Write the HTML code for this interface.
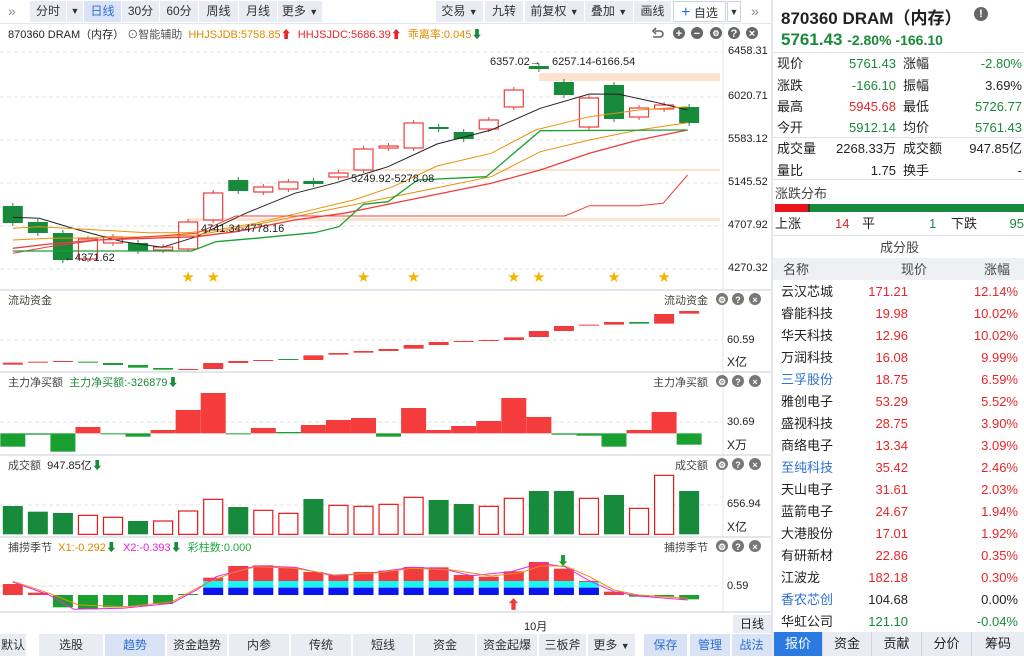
<!DOCTYPE html>
<html><head><meta charset="utf-8"><style>
*{margin:0;padding:0;box-sizing:border-box}
body{width:1024px;height:656px;overflow:hidden;background:#fff;font-family:"Liberation Sans","Noto Sans CJK SC",sans-serif;font-size:12px;color:#222;position:relative}
.a{position:absolute;white-space:nowrap}
.btn{position:absolute;top:1px;height:21px;background:#e9ecf3;line-height:21px;text-align:center;font-size:12px;color:#333}
.tab{position:absolute;top:634px;height:22px;background:#e9ecf3;line-height:22px;text-align:center;font-size:12px;color:#333}
.r{color:#e8262a}.g{color:#198a3a}.b{color:#2f6fd0}
.row{position:absolute;left:775px;width:249px;height:21px;font-size:13px;line-height:21px}
.row span{position:absolute}
.sep{position:absolute;left:773px;width:251px;height:1px;background:#dde1ea}
</style></head><body>
<div class="a" style="left:8px;top:3px;font-size:14px;color:#888">»</div>
<div class="btn" style="left:30px;width:36px">分时</div>
<div class="btn" style="left:67px;width:16px;font-size:9px">▼</div>
<div class="btn" style="left:84px;width:37px;background:#d9e3f5;color:#2f6fd0">日线</div>
<div class="btn" style="left:122px;width:37px">30分</div>
<div class="btn" style="left:160px;width:38px">60分</div>
<div class="btn" style="left:199px;width:39px">周线</div>
<div class="btn" style="left:239px;width:38px">月线</div>
<div class="btn" style="left:278px;width:44px">更多 <span style="font-size:9px">▼</span></div>
<div class="btn" style="left:436px;width:47px">交易 <span style="font-size:9px">▼</span></div>
<div class="btn" style="left:485px;width:38px">九转</div>
<div class="btn" style="left:525px;width:59px">前复权 <span style="font-size:9px">▼</span></div>
<div class="btn" style="left:585px;width:48px">叠加 <span style="font-size:9px">▼</span></div>
<div class="btn" style="left:634px;width:37px">画线</div>
<div class="btn" style="left:673px;width:53px;background:#fff;border:1px solid #c9d3e6"><span class="b" style="font-size:16px">+</span> 自选</div>
<div class="btn" style="left:727px;width:14px;background:#fff;border:1px solid #c9d3e6;font-size:9px">▼</div>
<div class="a" style="left:751px;top:3px;font-size:14px;color:#888">»</div>
<div class="a" style="left:0;top:23px;width:771px;height:1px;background:#e3e6ec"></div>
<div class="a" style="left:771px;top:0;width:2px;height:656px;background:#e3e6ec"></div>
<div class="a" style="left:8px;top:26px;font-size:11px">870360 DRAM（内存） <span style="color:#555">⊙智能辅助</span> &nbsp;<span style="color:#e08a00">HHJSJDB:5758.85</span><span class="r">⬆</span> &nbsp;<span class="r">HHJSJDC:5686.39⬆</span> &nbsp;<span style="color:#e08a00">乖离率:0.045</span><span class="g">⬇</span></div>
<svg id="c" class="a" style="left:0;top:0" width="771" height="634"></svg>
<div class="a" style="left:728px;top:45px;font-size:11px">6458.31</div>
<div class="a" style="left:728px;top:90px;font-size:11px">6020.71</div>
<div class="a" style="left:728px;top:133px;font-size:11px">5583.12</div>
<div class="a" style="left:728px;top:176px;font-size:11px">5145.52</div>
<div class="a" style="left:728px;top:219px;font-size:11px">4707.92</div>
<div class="a" style="left:728px;top:262px;font-size:11px">4270.32</div>
<div class="a" style="left:490px;top:56px;font-size:11px">6357.02→</div>
<div class="a" style="left:552px;top:56px;font-size:11px">6257.14-6166.54</div>
<div class="a" style="left:351px;top:173px;font-size:11px">5249.92-5278.08</div>
<div class="a" style="left:201px;top:223px;font-size:11px">4741.34-4778.16</div>
<div class="a" style="left:64px;top:252px;font-size:11px">←4371.62</div>
<div class="a" style="left:8px;top:292px;font-size:11px;color:#444">流动资金</div>
<div class="a" style="left:664px;top:292px;font-size:11px;color:#444">流动资金</div>
<div class="a" style="left:727px;top:334px;font-size:11px">60.59</div>
<div class="a" style="left:727px;top:353px;font-size:12px">X亿</div>
<div class="a" style="left:8px;top:374px;font-size:11px;color:#444">主力净买额 &nbsp;<span class="g">主力净买额:-326879⬇</span></div>
<div class="a" style="left:653px;top:374px;font-size:11px;color:#444">主力净买额</div>
<div class="a" style="left:727px;top:416px;font-size:11px">30.69</div>
<div class="a" style="left:727px;top:436px;font-size:12px">X万</div>
<div class="a" style="left:8px;top:457px;font-size:11px;color:#444">成交额 &nbsp;<span style="color:#222">947.85亿</span><span class="g">⬇</span></div>
<div class="a" style="left:675px;top:457px;font-size:11px;color:#444">成交额</div>
<div class="a" style="left:727px;top:498px;font-size:11px">656.94</div>
<div class="a" style="left:727px;top:518px;font-size:12px">X亿</div>
<div class="a" style="left:8px;top:539px;font-size:11px;color:#444">捕捞季节 &nbsp;<span style="color:#e08a00">X1:-0.292</span><span class="g">⬇</span> &nbsp;<span style="color:#e020e0">X2:-0.393</span><span class="g">⬇</span> &nbsp;<span style="color:#22a83a">彩柱数:0.000</span></div>
<div class="a" style="left:664px;top:539px;font-size:11px;color:#444">捕捞季节</div>
<div class="a" style="left:727px;top:580px;font-size:11px">0.59</div>
<div class="a" style="left:524px;top:618px;font-size:11px">10月</div>
<div class="a" style="left:733px;top:615px;width:38px;height:18px;background:#e9ecf3;text-align:center;line-height:18px">日线</div>
<div class="tab" style="left:0;width:26px">默认</div>
<div class="tab" style="left:39px;width:64px">选股</div>
<div class="tab" style="left:105px;width:60px;background:#d9e3f5;color:#2f6fd0">趋势</div>
<div class="tab" style="left:167px;width:60px">资金趋势</div>
<div class="tab" style="left:229px;width:60px">内参</div>
<div class="tab" style="left:291px;width:60px">传统</div>
<div class="tab" style="left:353px;width:60px">短线</div>
<div class="tab" style="left:415px;width:60px">资金</div>
<div class="tab" style="left:477px;width:60px">资金起爆</div>
<div class="tab" style="left:539px;width:47px">三板斧</div>
<div class="tab" style="left:588px;width:47px">更多 <span style="font-size:9px">▼</span></div>
<div class="tab" style="left:644px;width:43px;background:#d9e3f5;color:#2f6fd0">保存</div>
<div class="tab" style="left:690px;width:40px;background:#d9e3f5;color:#2f6fd0">管理</div>
<div class="tab" style="left:732px;width:39px;background:#d9e3f5;color:#2f6fd0">战法</div>
<div class="a" style="left:781px;top:4px;font-size:17px;font-weight:bold">870360 DRAM（内存）</div>
<div class="a" style="left:974px;top:7px;width:14px;height:14px;border-radius:7px;background:#666;color:#fff;font-size:11px;font-weight:bold;text-align:center;line-height:14px">!</div>
<div class="a g" style="left:781px;top:30px;font-size:17px;font-weight:bold">5761.43 <span style="font-size:14px">-2.80% -166.10</span></div>
<div class="sep" style="top:52px"></div>
<div class="row" style="top:53px"><span style="left:2px">现价</span><span class="g" style="right:128px">5761.43</span><span style="left:128px">涨幅</span><span class="g" style="right:2px">-2.80%</span></div>
<div class="row" style="top:75px"><span style="left:2px">涨跌</span><span class="g" style="right:128px">-166.10</span><span style="left:128px">振幅</span><span style="right:2px">3.69%</span></div>
<div class="row" style="top:96px"><span style="left:2px">最高</span><span class="r" style="right:128px">5945.68</span><span style="left:128px">最低</span><span class="g" style="right:2px">5726.77</span></div>
<div class="row" style="top:117px"><span style="left:2px">今开</span><span class="g" style="right:128px">5912.14</span><span style="left:128px">均价</span><span class="g" style="right:2px">5761.43</span></div>
<div class="sep" style="top:137px"></div>
<div class="row" style="top:138px"><span style="left:2px">成交量</span><span style="right:128px">2268.33万</span><span style="left:128px">成交额</span><span style="right:2px">947.85亿</span></div>
<div class="row" style="top:160px"><span style="left:2px">量比</span><span style="right:128px">1.75</span><span style="left:128px">换手</span><span style="right:2px">-</span></div>
<div class="sep" style="top:179px"></div>
<div class="a" style="left:775px;top:183px;font-size:13px;color:#444">涨跌分布</div>
<div class="a" style="left:775px;top:204px;width:33px;height:8px;background:#e8161b"></div>
<div class="a" style="left:808px;top:204px;width:216px;height:8px;background:#178a3b;border-left:2px solid #333"></div>
<div class="row" style="top:213px"><span style="left:0">上涨</span><span class="r" style="left:60px">14</span><span style="left:87px">平</span><span class="g" style="left:154px">1</span><span style="left:176px">下跌</span><span class="g" style="right:0">95</span></div>
<div class="sep" style="top:235px"></div>
<div class="a" style="left:880px;top:237px;font-size:13px;color:#444">成分股</div>
<div class="a" style="left:773px;top:258px;width:251px;height:22px;background:#eff0f3"></div>
<div class="row" style="top:259px;color:#444"><span style="left:8px">名称</span><span style="left:126px">现价</span><span style="left:209px">涨幅</span></div>
<div class="a" style="left:773px;top:632px;width:251px;height:24px;background:#e9ecf3"></div>
<div class="a" style="left:774px;top:632px;width:48px;height:24px;background:#2a7ae2;color:#fff;font-size:13px;text-align:center;line-height:24px">报价</div>
<div class="a" style="left:822px;top:632px;width:49px;font-size:13px;text-align:center;line-height:24px;border-left:1px solid #d0d4dc">资金</div>
<div class="a" style="left:871px;top:632px;width:50px;font-size:13px;text-align:center;line-height:24px;border-left:1px solid #d0d4dc">贡献</div>
<div class="a" style="left:921px;top:632px;width:50px;font-size:13px;text-align:center;line-height:24px;border-left:1px solid #d0d4dc">分价</div>
<div class="a" style="left:971px;top:632px;width:53px;font-size:13px;text-align:center;line-height:24px;border-left:1px solid #d0d4dc">筹码</div>
<div>
<div class="row" style="top:281px"><span style="left:6px">云汉芯城</span><span class="r" style="right:116px">171.21</span><span class="r" style="right:6px">12.14%</span></div>
<div class="row" style="top:303px"><span style="left:6px">睿能科技</span><span class="r" style="right:116px">19.98</span><span class="r" style="right:6px">10.02%</span></div>
<div class="row" style="top:325px"><span style="left:6px">华天科技</span><span class="r" style="right:116px">12.96</span><span class="r" style="right:6px">10.02%</span></div>
<div class="row" style="top:347px"><span style="left:6px">万润科技</span><span class="r" style="right:116px">16.08</span><span class="r" style="right:6px">9.99%</span></div>
<div class="row" style="top:369px"><span style="left:6px" class="b">三孚股份</span><span class="r" style="right:116px">18.75</span><span class="r" style="right:6px">6.59%</span></div>
<div class="row" style="top:391px"><span style="left:6px">雅创电子</span><span class="r" style="right:116px">53.29</span><span class="r" style="right:6px">5.52%</span></div>
<div class="row" style="top:413px"><span style="left:6px">盛视科技</span><span class="r" style="right:116px">28.75</span><span class="r" style="right:6px">3.90%</span></div>
<div class="row" style="top:435px"><span style="left:6px">商络电子</span><span class="r" style="right:116px">13.34</span><span class="r" style="right:6px">3.09%</span></div>
<div class="row" style="top:457px"><span style="left:6px" class="b">至纯科技</span><span class="r" style="right:116px">35.42</span><span class="r" style="right:6px">2.46%</span></div>
<div class="row" style="top:479px"><span style="left:6px">天山电子</span><span class="r" style="right:116px">31.61</span><span class="r" style="right:6px">2.03%</span></div>
<div class="row" style="top:501px"><span style="left:6px">蓝箭电子</span><span class="r" style="right:116px">24.67</span><span class="r" style="right:6px">1.94%</span></div>
<div class="row" style="top:523px"><span style="left:6px">大港股份</span><span class="r" style="right:116px">17.01</span><span class="r" style="right:6px">1.92%</span></div>
<div class="row" style="top:545px"><span style="left:6px">有研新材</span><span class="r" style="right:116px">22.86</span><span class="r" style="right:6px">0.35%</span></div>
<div class="row" style="top:567px"><span style="left:6px">江波龙</span><span class="r" style="right:116px">182.18</span><span class="r" style="right:6px">0.30%</span></div>
<div class="row" style="top:589px"><span style="left:6px" class="b">香农芯创</span><span style="right:116px">104.68</span><span style="right:6px">0.00%</span></div>
<div class="row" style="top:611px"><span style="left:6px">华虹公司</span><span class="g" style="right:116px">121.10</span><span class="g" style="right:6px">-0.04%</span></div>
</div>
<script>
var s=document.getElementById('c'),h='';
var R='#f03c3c',G='#178a3b';
function cx(i){return 12.8+25.05*i}
function rect(x,y,w,hh,f,st){h+='<rect x="'+x+'" y="'+y+'" width="'+w+'" height="'+Math.max(hh,1)+'" fill="'+f+'"'+(st?' stroke="'+st+'" stroke-width="1.2"':'')+'/>'}
function line(x1,y1,x2,y2,c,d,w){h+='<line x1="'+x1+'" y1="'+y1+'" x2="'+x2+'" y2="'+y2+'" stroke="'+c+'" stroke-width="'+(w||1)+'"'+(d?' stroke-dasharray="4,3"':'')+'/>'}
function poly(p,c,b,w){var q=[];for(var i=0;i<p.length;i+=2)q.push((p[i]/2.036).toFixed(1)+','+(b+p[i+1]/3).toFixed(1));h+='<polyline points="'+q.join(' ')+'" fill="none" stroke="'+c+'" stroke-width="'+(w||1)+'"/>'}
[52,97,140,183,226,269].forEach(function(y){line(0,y,722,y,'#e2e2e2',1)});
line(723,24,723,290,'#e3e6ec');
rect(539,73,181,8,'#fde3cf');rect(337,169,383,2,'#fde3cf');rect(187,218,533,3,'#fde3cf');
var C=[[206,223,G],[222,233,G],[233,260,G],[239,259,R],[237,243,R],[243,251,G],[247,250,R],[222,249,R],[193,220,R],[180,191,G],[187,192,R],[182,189,R],[181,184,G],[173,177,R],[149,170,R],[146,148,R],[123,148,R],[127,129,G],[132,139,G],[120,129,R],[90,107,R],[66,69,G],[82,95,G],[98,127,R],[85,119,G],[108,117,R],[105,109,R],[107,123,G]];
C.forEach(function(c,i){var x=cx(i);line(x,c[0]-3,x,c[1]+3,c[2]);if(c[2]==R)rect(x-9.5,c[0],19,c[1]-c[0],'#fff',R);else rect(x-10,c[0],20,c[1]-c[0],G)});
poly([26,532,80,535,160,570,250,605,330,622,400,590,500,520,600,460,680,430,790,380,890,312,1000,270,1100,205,1200,162,1260,163,1330,185,1400,210],'#222',40);
poly([26,565,80,560,200,570,300,578,380,578,440,570,520,550,620,515,720,480,800,440,890,378,1000,340,1090,270,1200,230,1300,210,1400,200],'#e8900a',40);
poly([26,600,100,595,200,593,300,590,400,585,500,560,600,530,700,500,800,470,900,440,1000,410,1100,335,1200,300,1300,270,1400,248],'#e8900a',40);
poly([26,625,100,612,200,600,300,595,400,590,480,575,600,540,700,520,800,490,900,460,1000,430,1100,390,1200,340,1300,300,1400,270],'#f03c3c',40,1.3);
poly([26,640,100,620,200,600,300,590,400,580,480,528,1150,528,1200,497,1300,497,1350,490,1400,405],'#f03c3c',40);
poly([26,633,390,633,440,605,520,595,640,578,690,560,740,493,790,485,850,420,990,410,1100,272,1400,270],'#1aa030',40,1.3);
[7,8,14,16,20,21,24,26].forEach(function(i){h+='<text x="'+(cx(i)-6)+'" y="281" font-size="12" fill="#f5b400">★</text>'});
// top chart icons
h+='<path d="M653 37 h7 a3 3 0 0 0 0-6 h-5 M656 28 l-3 3 3 3" fill="none" stroke="#666" stroke-width="1.6"/>';
[679,697,716,734,752].forEach(function(x,k){h+='<circle cx="'+x+'" cy="33" r="6" fill="#666"/>';
 var t=['+','−','⚙','?','×'][k];h+='<text x="'+x+'" y="'+(k==2?36:37)+'" font-size="'+(k==2?8:11)+'" fill="#fff" text-anchor="middle" font-weight="bold">'+t+'</text>'});
[290,372,455,537,612].forEach(function(y){line(0,y,771,y,'#e3e6ec',0,2)});
line(723,290,723,612,'#e3e6ec');
[292,374,457,539].forEach(function(y){[717,733,750].forEach(function(x,k){h+='<circle cx="'+(x+5)+'" cy="'+(y+7)+'" r="6" fill="#777"/><text x="'+(x+5)+'" y="'+(y+11)+'" font-size="9" fill="#fff" text-anchor="middle" font-weight="bold">'+['⚙','?','×'][k]+'</text>'})});
line(0,340,722,340,'#e2e2e2',1);
var L=[[218,224,R],[215,218,R],[213,216,R],[215,218,G],[219,225,G],[225,233,G],[234,239,G],[237,240,R],[219,237,R],[213,219,R],[210,213,R],[207,210,G],[196,210,R],[189,194,R],[183,188,R],[177,183,R],[165,176,R],[156,165,R],[153,156,R],[150,153,R],[142,150,R],[123,141,R],[108,123,R],[104,107,R],[96,104,R],[96,101,G],[72,101,R],[63,71,R]];
L.forEach(function(c,i){rect(cx(i)-10,290+c[0]/3,20,(c[1]-c[0])/3,c[2]==R?'#f03c3c':'#1aa030')});
line(0,422,722,422,'#e2e2e2',1);
var M=[[430,470,G],[430,434,G],[430,485,G],[411,430,R],[430,432,G],[430,440,G],[420,430,R],[360,430,R],[309,430,R],[430,432,G],[414,430,R],[426,430,G],[405,430,R],[390,430,R],[384,430,R],[430,440,G],[354,430,R],[420,430,R],[408,430,R],[393,430,R],[324,430,R],[381,430,R],[430,434,G],[430,437,G],[430,470,G],[420,430,R],[366,430,R],[430,464,G]];
M.forEach(function(c,i){rect(cx(i)-12.5,290+c[0]/3,25,(c[1]-c[0])/3,c[2]==R?'#f53c3c':'#1aa030')});
line(0,505,722,505,'#e2e2e2',1);
var V=[[648,G],[665,G],[669,G],[676,R],[682,R],[693,G],[693,R],[663,R],[628,R],[651,G],[661,R],[670,R],[627,G],[646,R],[649,R],[643,R],[622,R],[630,G],[642,G],[649,R],[625,R],[603,G],[603,G],[625,R],[615,G],[655,R],[556,R],[603,G]];
V.forEach(function(c,i){var t=290+c[0]/3,b=290+733/3;if(c[1]==R)rect(cx(i)-9.5,t,19,b-t,'#fff','#e8161b');else rect(cx(i)-10,t,20,b-t,G)});
line(0,586,722,586,'#e2e2e2',1);
var B=[[882,915,R],[908,915,R],[915,952,G],[915,958,G],[915,952,G],[915,948,G],[915,942,G],[912,915,G],[863,873,R],[828,873,R],[826,873,R],[832,873,R],[846,873,R],[855,873,R],[846,873,R],[842,873,R],[831,873,R],[832,873,R],[855,873,R],[860,873,R],[844,873,R],[816,873,R],[836,873,R],[873,873,R],[905,915,R],[915,920,G],[915,920,G],[915,928,G]];
B.forEach(function(c,i){var x=cx(i)-10;if(i>=8&&i<=23){rect(x,290+873/3,20,20/3,'#19f5f5');rect(x,290+893/3,20,22/3,'#0a14f0')}rect(x,290+c[0]/3,20,(c[1]-c[0])/3,c[2]==R?'#f03c3c':'#1aa030')});
poly([26,876,100,915,150,958,250,955,350,940,400,900,440,860,520,828,600,832,680,858,760,848,840,832,900,836,960,857,1040,845,1100,820,1150,830,1200,872,1250,905,1300,918,1400,930],'#f020f0',290);
poly([26,874,100,910,160,945,260,950,350,935,420,880,470,850,520,830,600,835,680,855,760,850,840,835,920,840,1000,858,1060,848,1100,828,1150,828,1200,860,1250,900,1300,915,1400,925],'#e8900a',290);
h+='<text x="507" y="609" font-size="13" fill="#f03c3c">⬆</text><text x="557" y="565" font-size="12" fill="#1aa030">⬇</text>';
s.innerHTML=h;
</script>
</body></html>
